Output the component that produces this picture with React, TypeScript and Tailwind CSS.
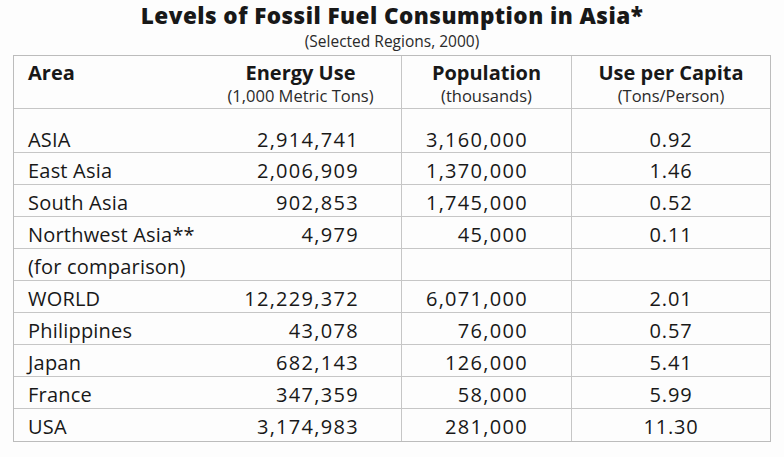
const rows = [
  { area: "ASIA", energy: "2,914,741", pop: "3,160,000", cap: "0.92" },
  { area: "East Asia", energy: "2,006,909", pop: "1,370,000", cap: "1.46" },
  { area: "South Asia", energy: "902,853", pop: "1,745,000", cap: "0.52" },
  { area: "Northwest Asia**", energy: "4,979", pop: "45,000", cap: "0.11" },
  { area: "(for comparison)", energy: "", pop: "", cap: "" },
  { area: "WORLD", energy: "12,229,372", pop: "6,071,000", cap: "2.01" },
  { area: "Philippines", energy: "43,078", pop: "76,000", cap: "0.57" },
  { area: "Japan", energy: "682,143", pop: "126,000", cap: "5.41" },
  { area: "France", energy: "347,359", pop: "58,000", cap: "5.99" },
  { area: "USA", energy: "3,174,983", pop: "281,000", cap: "11.30" },
]

export default function App() {
  return (
    <div className="w-[784px] h-[457px] bg-[#fdfdfd] text-[#181818] font-['Open_Sans',sans-serif]">
      {/* Title */}
      <div className="pt-[3px] text-center">
        <h1 className="text-[22.5px] leading-[26px] font-extrabold tracking-[0.45px]">
          Levels of Fossil Fuel Consumption in Asia*
        </h1>
        <p className="mt-[3px] text-[15.5px] leading-[19px] text-[#2a2a2a]">(Selected Regions, 2000)</p>
      </div>

      {/* Table */}
      <div className="ml-[13px] mt-[4px] w-[758px] border border-[#bcbcbc]">
        <div className="grid grid-cols-[186px_201px_170px_199px] h-[53px] border-b border-[#c6c6c6]">
          <div className="pl-[14px] pt-[5px] text-[20px] leading-[24px] font-bold">Area</div>
          <div className="pt-[5px] text-center">
            <div className="text-[20px] leading-[24px] font-bold">Energy Use</div>
            <div className="text-[16.5px] leading-[21px] text-[#2a2a2a]">(1,000 Metric Tons)</div>
          </div>
          <div className="pt-[5px] text-center border-l border-[#c6c6c6]">
            <div className="text-[20px] leading-[24px] font-bold">Population</div>
            <div className="text-[16.5px] leading-[21px] text-[#2a2a2a]">(thousands)</div>
          </div>
          <div className="pt-[5px] text-center border-l border-[#c6c6c6]">
            <div className="text-[20px] leading-[24px] font-bold">Use per Capita</div>
            <div className="text-[16.5px] leading-[21px] text-[#2a2a2a]">(Tons/Person)</div>
          </div>
        </div>

        {rows.map((r, i) => (
          <div
            key={r.area}
            className={`grid grid-cols-[186px_201px_170px_199px] text-[20px] leading-[24px] ${
              i === rows.length - 1 ? "" : "border-b border-[#c6c6c6]"
            } ${i === 0 ? "h-[44px]" : "h-[32px]"}`}
          >
            <div className={`pl-[14px] tracking-[0.2px] ${i === 0 ? "pt-[19px]" : "pt-[6px]"}`}>{r.area}</div>
            <div className={`pr-[42px] text-right tracking-[1.3px] ${i === 0 ? "pt-[19px]" : "pt-[6px]"}`}>
              {r.energy}
            </div>
            <div
              className={`pr-[43px] text-right tracking-[1.3px] border-l border-[#c6c6c6] ${
                i === 0 ? "pt-[19px]" : "pt-[6px]"
              }`}
            >
              {r.pop}
            </div>
            <div
              className={`text-center tracking-[0.8px] border-l border-[#c6c6c6] ${
                i === 0 ? "pt-[19px]" : "pt-[6px]"
              }`}
            >
              {r.cap}
            </div>
          </div>
        ))}
      </div>
    </div>
  )
}
